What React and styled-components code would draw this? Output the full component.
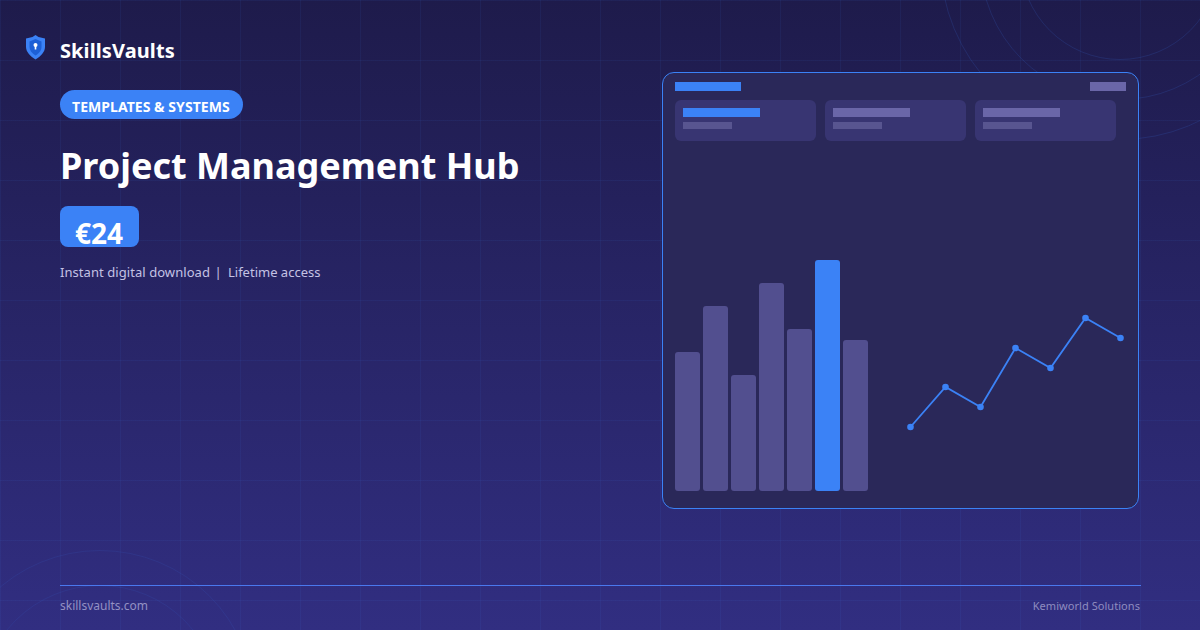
import React from 'react';
import styled, { createGlobalStyle } from 'styled-components';

const GlobalStyle = createGlobalStyle`
  html, body { margin: 0; padding: 0; }
  body { font-family: "Noto Sans", sans-serif; }
`;

const Page = styled.div`
  position: relative;
  width: 1200px;
  height: 630px;
  overflow: hidden;
  background: linear-gradient(180deg, #1e1b4b 0%, #312e81 100%);
  color: #fff;
`;

const Grid = styled.div`
  position: absolute;
  inset: 0;
  background-image:
    linear-gradient(rgba(59, 130, 246, 0.07) 1px, transparent 1px),
    linear-gradient(90deg, rgba(59, 130, 246, 0.07) 1px, transparent 1px);
  background-size: 60px 60px;
`;

const Ring = styled.div`
  position: absolute;
  left: ${p => p.$x - p.$r}px;
  top: ${p => p.$y - p.$r}px;
  width: ${p => p.$r * 2}px;
  height: ${p => p.$r * 2}px;
  box-sizing: border-box;
  border: 1px solid rgba(59, 130, 246, ${p => p.$a});
  border-radius: 50%;
`;

const Logo = styled.div`
  position: absolute;
  left: 26px;
  top: 36px;
  display: flex;
  align-items: flex-start;
  gap: 15px;
  font-size: 20px;
  font-weight: 700;
  line-height: 30px;
  letter-spacing: 0.1px;

  svg {
    margin-top: -2px;
  }
`;

const Left = styled.div`
  position: absolute;
  left: 60px;
  top: 90px;
  display: flex;
  flex-direction: column;
  align-items: flex-start;
`;

const Tag = styled.div`
  height: 29px;
  line-height: 33px;
  padding: 0 13px 0 12px;
  border-radius: 15px;
  background: #3b82f6;
  font-size: 14px;
  font-weight: 700;
  letter-spacing: 0.05px;
`;

const Title = styled.h1`
  margin: 22px 0 0;
  font-size: 36px;
  font-weight: 700;
  line-height: 50px;
`;

const Price = styled.div`
  margin-top: 15px;
  height: 41px;
  line-height: 54px;
  padding: 0 16px 0 15px;
  border-radius: 8px;
  background: #3b82f6;
  font-size: 28px;
  font-weight: 700;
`;

const Sub = styled.div`
  margin-top: 16px;
  display: flex;
  font-size: 13px;
  line-height: 18px;
  color: #c4c2e4;
`;

const SubLead = styled.span`
  letter-spacing: 0.06px;
`;

const Sep = styled.span`
  width: 16px;
  margin-right: 2px;
  text-align: center;
`;

const Card = styled.div`
  position: absolute;
  left: 662px;
  top: 72px;
  width: 477px;
  height: 437px;
  box-sizing: border-box;
  padding: 9px 12px 17px;
  border: 1px solid #3b82f6;
  border-radius: 12px;
  background: #2a2859;
  display: flex;
  flex-direction: column;
`;

const CardHead = styled.div`
  display: flex;
  justify-content: space-between;
`;

const Block = styled.div`
  width: ${p => p.$w}px;
  height: ${p => p.$h}px;
  background: ${p => p.$c};
`;

const Stats = styled.div`
  display: flex;
  gap: 9px;
  margin-top: 9px;
`;

const Stat = styled.div`
  width: 141px;
  height: 41px;
  box-sizing: border-box;
  padding: 8px;
  border-radius: 6px;
  background: #383572;
  display: flex;
  flex-direction: column;
  gap: 5px;
`;

const Charts = styled.div`
  flex: 1;
  display: flex;
  align-items: flex-end;
  justify-content: space-between;
`;

const Bars = styled.div`
  display: flex;
  align-items: flex-end;
  gap: 3px;
`;

const Bar = styled.div`
  width: 25px;
  height: ${p => p.$h}px;
  border-radius: 3px;
  background: ${p => (p.$on ? '#3b82f6' : '#524f8f')};
`;

const Line = styled.svg`
  margin: 0 -4px 58px 0;
`;

const Footer = styled.div`
  position: absolute;
  left: 60px;
  right: 59px;
  top: 585px;
  border-top: 1px solid #4a78ee;
  padding: 12px 1px 0 0;
  display: flex;
  justify-content: space-between;
  align-items: center;
  font-size: 12px;
  line-height: 16px;
  color: #9391c4;
`;

const Maker = styled.span`
  font-size: 11px;
  letter-spacing: 0.05px;
  color: #8e8cc0;
`;

const bars = [139, 185, 116, 208, 162, 231, 151];
const points = [[910, 426], [945, 386], [980, 406], [1015, 347], [1050, 367], [1085, 317], [1120, 337]];

function Shield() {
  return (
    <svg width="19" height="26" viewBox="0 0 19 26">
      <path d="M9.5 1 L12.5 3 L19 4.5 V13 C19 18 14.5 22.5 9.5 25.5 C4.5 22.5 0 18 0 13 V4.5 L6.5 3 Z" fill="#3b82f6" />
      <path d="M9.5 5 L15.5 7.5 V13 C15.5 16.5 13 19.5 9.5 21.5 C6 19.5 3.5 16.5 3.5 13 V7.5 Z" fill="#1d5fd6" />
      <circle cx="9.5" cy="11" r="2" fill="#fff" />
      <rect x="8.7" y="11" width="1.6" height="4.5" fill="#fff" />
    </svg>
  );
}

function LineChart() {
  const str = points.map(([x, y]) => `${x - 904.5},${y - 312}`).join(' ');
  return (
    <Line width="225" height="120" viewBox="0 0 225 120">
      <polyline points={str} fill="none" stroke="#3b82f6" strokeWidth="1.8" />
      {points.map(([x, y]) => (
        <circle key={x} cx={x - 904.5} cy={y - 312} r="3.3" fill="#3b82f6" />
      ))}
    </Line>
  );
}

export default function App() {
  return (
    <Page>
      <GlobalStyle />
      <Grid />
      <Ring $x={1120} $y={-40} $r={100} $a={0.15} />
      <Ring $x={1120} $y={-40} $r={140} $a={0.15} />
      <Ring $x={1120} $y={-40} $r={180} $a={0.15} />
      <Ring $x={100} $y={705} $r={120} $a={0.1} />
      <Ring $x={100} $y={705} $r={155} $a={0.1} />
      <Logo>
        <Shield />
        SkillsVaults
      </Logo>
      <Left>
        <Tag>TEMPLATES &amp; SYSTEMS</Tag>
        <Title>Project Management Hub</Title>
        <Price>€24</Price>
        <Sub>
          <SubLead>Instant digital download</SubLead>
          <Sep>|</Sep>
          <span>Lifetime access</span>
        </Sub>
      </Left>
      <Card>
        <CardHead>
          <Block $w={66} $h={9} $c="#3b82f6" />
          <Block $w={36} $h={9} $c="#6a66a8" />
        </CardHead>
        <Stats>
          <Stat>
            <Block $w={77} $h={9} $c="#3b82f6" />
            <Block $w={49} $h={7} $c="#585590" />
          </Stat>
          <Stat>
            <Block $w={77} $h={9} $c="#6a66a8" />
            <Block $w={49} $h={7} $c="#585590" />
          </Stat>
          <Stat>
            <Block $w={77} $h={9} $c="#6a66a8" />
            <Block $w={49} $h={7} $c="#585590" />
          </Stat>
        </Stats>
        <Charts>
          <Bars>
            {bars.map((h, i) => (
              <Bar key={i} $h={h} $on={i === 5} />
            ))}
          </Bars>
          <LineChart />
        </Charts>
      </Card>
      <Footer>
        <span>skillsvaults.com</span>
        <Maker>Kemiworld Solutions</Maker>
      </Footer>
    </Page>
  );
}
